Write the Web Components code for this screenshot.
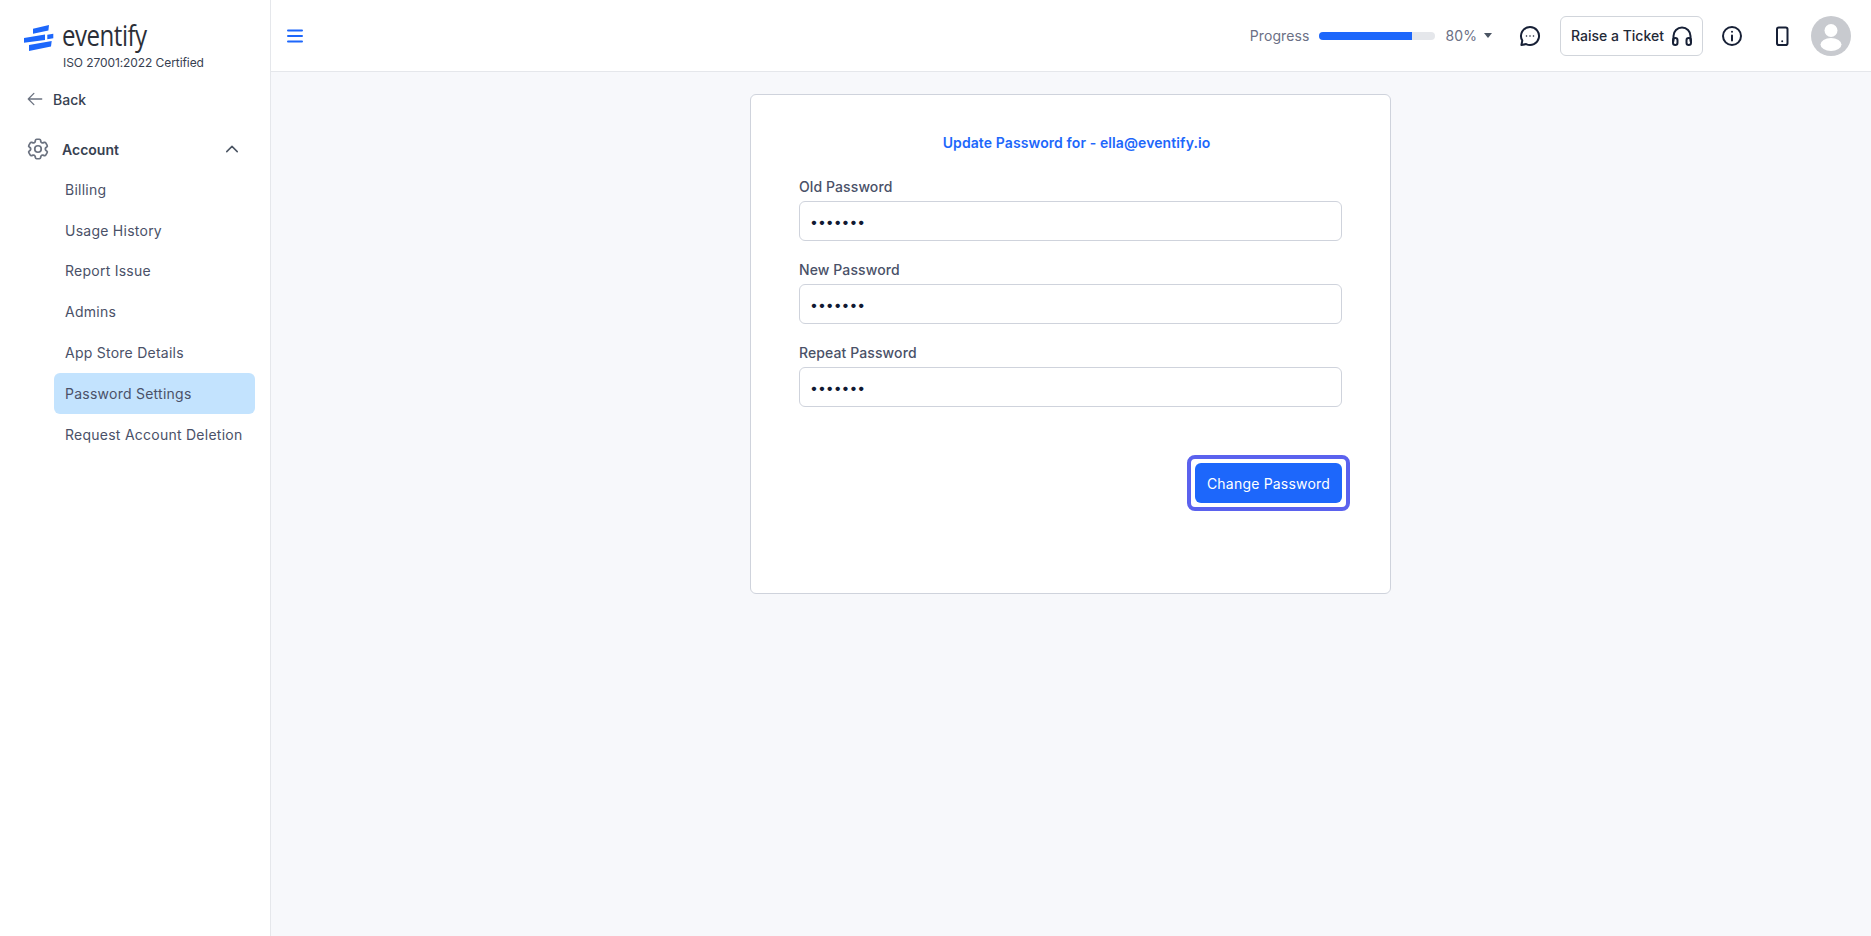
<!doctype html>
<html>
<head>
<meta charset="utf-8">
<title>Password Settings</title>
<style>
    html, body { margin: 0; height: 100%; }
    body { font-family: Inter, "Liberation Sans", sans-serif; background: #f7f8fb; overflow: hidden; }
</style>
</head>
<body>
<app-shell>
    <side-bar slot="side"></side-bar>
    <top-bar slot="top"></top-bar>
    <password-card></password-card>
</app-shell>

<script>
class AppShell extends HTMLElement {
    constructor() {
        super()
        this.attachShadow({mode: 'open'}).innerHTML = `
            <style>
                :host { display: grid; grid-template-columns: 271px 1fr; grid-template-rows: 72px 1fr; height: 936px; }
                .side { grid-row: 1 / 3; display: block; }
                main { display: flex; justify-content: center; align-items: flex-start; padding: 22px 1px 0 0; }
            </style>
            <div class="side"><slot name="side"></slot></div>
            <div><slot name="top"></slot></div>
            <main><slot></slot></main>
        `
    }
}
customElements.define('app-shell', AppShell)

class SideBar extends HTMLElement {
    constructor() {
        super()
        this.attachShadow({mode: 'open'}).innerHTML = `
            <style>
                :host { display: flex; flex-direction: column; box-sizing: border-box; height: 936px; background: #fff; border-right: 1px solid #e5e7eb; }
                .brand { padding: 21px 0 0 24px; }
                .logo { display: flex; align-items: center; gap: 8px; height: 32px; }
                .logo svg { margin-top: 2px; }
                .word { font: 400 29px/32px "Open Sans", sans-serif; color: #2b2f38; letter-spacing: -0.6px; transform: scaleX(.83); transform-origin: left center; margin-bottom: 4px; }
                .iso { font-size: 12px; line-height: 16px; color: #374151; margin: 2px 0 0 39px; letter-spacing: -.08px; }
                .back { display: flex; align-items: center; gap: 9px; margin: 16px 0 0 26px; height: 24px; font-size: 14px; font-weight: 500; color: #374151; }
                .account { display: flex; align-items: center; margin: 25px 0 0 25px; height: 26px; font-size: 14px; font-weight: 600; color: #374151; }
                .account span { margin-left: 11px; flex: 1; }
                .account svg:last-child { margin-right: 29px; }
                nav { display: flex; flex-direction: column; margin: 7px 15px 0 54px; }
            </style>
            <div class="brand">
                <div class="logo">
                    <svg width="30" height="26" viewBox="0 0 30 26">
                        <path fill="#1d67fb" d="M9 3.8 25 0l-.6 5.6L9 8.8zM0 13l21-3.6V15L0 17.8zM23.3 9.8l6-1v4.4l-6 1zM5 20l22.7-4-.7 5.5L5 26z"/>
                    </svg>
                    <span class="word">eventify</span>
                </div>
                <div class="iso">ISO 27001:2022 Certified</div>
            </div>
            <div class="back">
                <svg width="18" height="18" viewBox="0 0 24 24" fill="none" stroke="#6b7280" stroke-width="1.7" stroke-linecap="round" stroke-linejoin="round"><path d="M10.5 19.5 3 12l7.5-7.5M3 12h18"/></svg>
                <span>Back</span>
            </div>
            <div class="account">
                <svg width="26" height="26" viewBox="0 0 24 24" fill="none" stroke="#6b7280" stroke-width="1.6" stroke-linecap="round" stroke-linejoin="round"><path d="M9.594 3.94c.09-.542.56-.94 1.11-.94h2.593c.55 0 1.02.398 1.11.94l.213 1.281c.063.374.313.686.645.87.074.04.147.083.22.127.324.196.72.257 1.075.124l1.217-.456a1.125 1.125 0 0 1 1.37.49l1.296 2.247a1.125 1.125 0 0 1-.26 1.431l-1.003.827c-.293.24-.438.613-.431.992a6.759 6.759 0 0 1 0 .255c-.007.378.138.75.43.99l1.005.828c.424.35.534.954.26 1.43l-1.298 2.247a1.125 1.125 0 0 1-1.369.491l-1.217-.456c-.355-.133-.75-.072-1.076.124a6.57 6.57 0 0 1-.22.128c-.331.183-.581.495-.644.869l-.213 1.28c-.09.543-.56.941-1.11.941h-2.594c-.55 0-1.02-.398-1.11-.94l-.213-1.281c-.062-.374-.312-.686-.644-.87a6.52 6.52 0 0 1-.22-.127c-.325-.196-.72-.257-1.076-.124l-1.217.456a1.125 1.125 0 0 1-1.369-.49l-1.297-2.247a1.125 1.125 0 0 1 .26-1.431l1.004-.827c.292-.24.437-.613.43-.992a6.932 6.932 0 0 1 0-.255c.007-.378-.138-.75-.43-.99l-1.004-.828a1.125 1.125 0 0 1-.26-1.43l1.297-2.247a1.125 1.125 0 0 1 1.37-.491l1.216.456c.356.133.751.072 1.076-.124.072-.044.146-.087.22-.128.332-.183.582-.495.644-.869l.214-1.281z"/><circle cx="12" cy="12" r="3"/></svg>
                <span>Account</span>
                <svg width="18" height="18" viewBox="0 0 24 24" fill="none" stroke="#4b5563" stroke-width="2" stroke-linecap="round" stroke-linejoin="round"><path d="m5 15.5 7-7 7 7"/></svg>
            </div>
            <nav>
                <side-link>Billing</side-link>
                <side-link>Usage History</side-link>
                <side-link>Report Issue</side-link>
                <side-link>Admins</side-link>
                <side-link>App Store Details</side-link>
                <side-link active>Password Settings</side-link>
                <side-link>Request Account Deletion</side-link>
            </nav>
        `
    }
}
customElements.define('side-bar', SideBar)

class SideLink extends HTMLElement {
    constructor() {
        super()
        this.attachShadow({mode: 'open'}).innerHTML = `
            <style>
                :host { display: flex; align-items: center; height: 40.8px; padding-left: 11px; border-radius: 6px; font-size: 14px; color: #4a5168; letter-spacing: .25px; white-space: nowrap; }
                :host([active]) { background: #c3e3fe; }
            </style>
            <slot></slot>
        `
    }
}
customElements.define('side-link', SideLink)

class TopBar extends HTMLElement {
    constructor() {
        super()
        this.attachShadow({mode: 'open'}).innerHTML = `
            <style>
                :host { display: flex; align-items: center; box-sizing: border-box; height: 72px; background: #fff; border-bottom: 1px solid #e5e7eb; padding: 0 20px 0 12px; }
                .menu { display: block; }
                .right { margin-left: auto; display: flex; align-items: center; }
                .label { font-size: 14px; color: #6b7085; letter-spacing: .1px; }
                .track { width: 116px; height: 8px; margin: 0 10px; background: #e5e7eb; border-radius: 4px; overflow: hidden; }
                .fill { width: 80%; height: 100%; background: #1d67fb; }
                .caret { margin: 0 26px 0 7px; width: 0; height: 0; border: 4.5px solid transparent; border-top: 5px solid #4b5563; border-bottom: 0; }
                .ticket { display: flex; align-items: center; gap: 6px; box-sizing: border-box; height: 40px; width: 143px; margin: 0 17px 0 18px; padding-left: 10px; border: 1px solid #d1d5db; border-radius: 6px; font-size: 14px; font-weight: 500; color: #1f2937; }
                .info { margin-right: 26px; }
                .phone { margin-right: 17px; }
                .avatar { width: 40px; height: 40px; border-radius: 50%; background: #c8cacf; overflow: hidden; }
                svg { display: block; flex: none; }
            </style>
            <svg class="menu" width="24" height="24" viewBox="0 0 24 24" fill="none" stroke="#1d67fb" stroke-width="2" stroke-linecap="round"><path d="M5 6.5h14M5 12h14M5 17.5h14"/></svg>
            <div class="right">
                <span class="label">Progress</span>
                <div class="track"><div class="fill"></div></div>
                <span class="label">80%</span>
                <div class="caret"></div>
                <svg width="24" height="24" viewBox="0 0 24 24" fill="none" stroke="#172036" stroke-width="2" stroke-linecap="round" stroke-linejoin="round"><path d="M12 3a9 9 0 1 1-3.9 17.1L3.4 21l.9-4.4A9 9 0 0 1 12 3z"/><path stroke-width="1.6" d="M8.5 12h.01M12 12h.01M15.5 12h.01"/></svg>
                <div class="ticket">
                    <span>Raise a Ticket</span>
                    <svg width="24" height="24" viewBox="0 0 24 24" fill="none" stroke="#172036" stroke-width="2" stroke-linecap="round" stroke-linejoin="round"><path d="M3.5 17v-5a8.5 8.5 0 0 1 17 0v5"/><rect x="3" y="14" width="4.5" height="7" rx="2.2"/><rect x="16.5" y="14" width="4.5" height="7" rx="2.2"/></svg>
                </div>
                <svg class="info" width="24" height="24" viewBox="0 0 24 24" fill="none" stroke="#172036" stroke-width="2" stroke-linecap="round"><circle cx="12" cy="12" r="9"/><path d="M12 11.5v5M12 7.8h.01"/></svg>
                <svg class="phone" width="24" height="24" viewBox="0 0 24 24" fill="none" stroke="#172036" stroke-width="2" stroke-linecap="round" stroke-linejoin="round"><rect x="7" y="3.5" width="10.5" height="17.5" rx="1.8"/><path d="M12.2 17.3h.01"/></svg>
                <div class="avatar">
                    <svg width="40" height="40" viewBox="0 0 40 40" fill="#fff"><circle cx="20" cy="14.5" r="6.5"/><ellipse cx="20" cy="28.5" rx="10.5" ry="6.5"/></svg>
                </div>
            </div>
        `
    }
}
customElements.define('top-bar', TopBar)

class PasswordField extends HTMLElement {
    constructor() {
        super()
        this.attachShadow({mode: 'open'}).innerHTML = `
            <style>
                :host { display: block; margin-bottom: 19px; }
                label { display: block; font-size: 14px; line-height: 20px; font-weight: 500; color: #4a5168; margin-bottom: 4px; letter-spacing: .1px; }
                input { display: block; box-sizing: border-box; width: 100%; height: 40px; padding: 0 10px; border: 1px solid #cfd3dc; border-radius: 6px; background: #fff; font: 14px Inter, sans-serif; color: #111a33; outline: none; }
            </style>
            <label id="l"><slot></slot></label>
            <input type="password" value="1234567" aria-labelledby="l">
        `
    }
}
customElements.define('password-field', PasswordField)

class PasswordCard extends HTMLElement {
    constructor() {
        super()
        this.attachShadow({mode: 'open'}).innerHTML = `
            <style>
                :host { display: block; box-sizing: border-box; width: 641px; height: 500px; padding: 38px 48px 0; background: #fff; border: 1px solid #cfd3dc; border-radius: 6px; }
                h2 { margin: 0 0 24px; padding-left: 12px; font-size: 14px; line-height: 20px; font-weight: 600; color: #1d67fb; text-align: center; letter-spacing: .1px; }
                .actions { display: flex; justify-content: flex-end; margin: 48px -8px 0 0; }
                .ring { padding: 4px; border: 4px solid #5b62ee; border-radius: 8px; }
                button { display: block; height: 40px; width: 147px; border: 0; border-radius: 6px; background: #1d67fb; color: #fff; font: 400 14px Inter, sans-serif; letter-spacing: .2px; }
            </style>
            <h2>Update Password for - ella@eventify.io</h2>
            <password-field>Old Password</password-field>
            <password-field>New Password</password-field>
            <password-field>Repeat Password</password-field>
            <div class="actions"><div class="ring"><button>Change Password</button></div></div>
        `
    }
}
customElements.define('password-card', PasswordCard)
</script>
</body>
</html>
